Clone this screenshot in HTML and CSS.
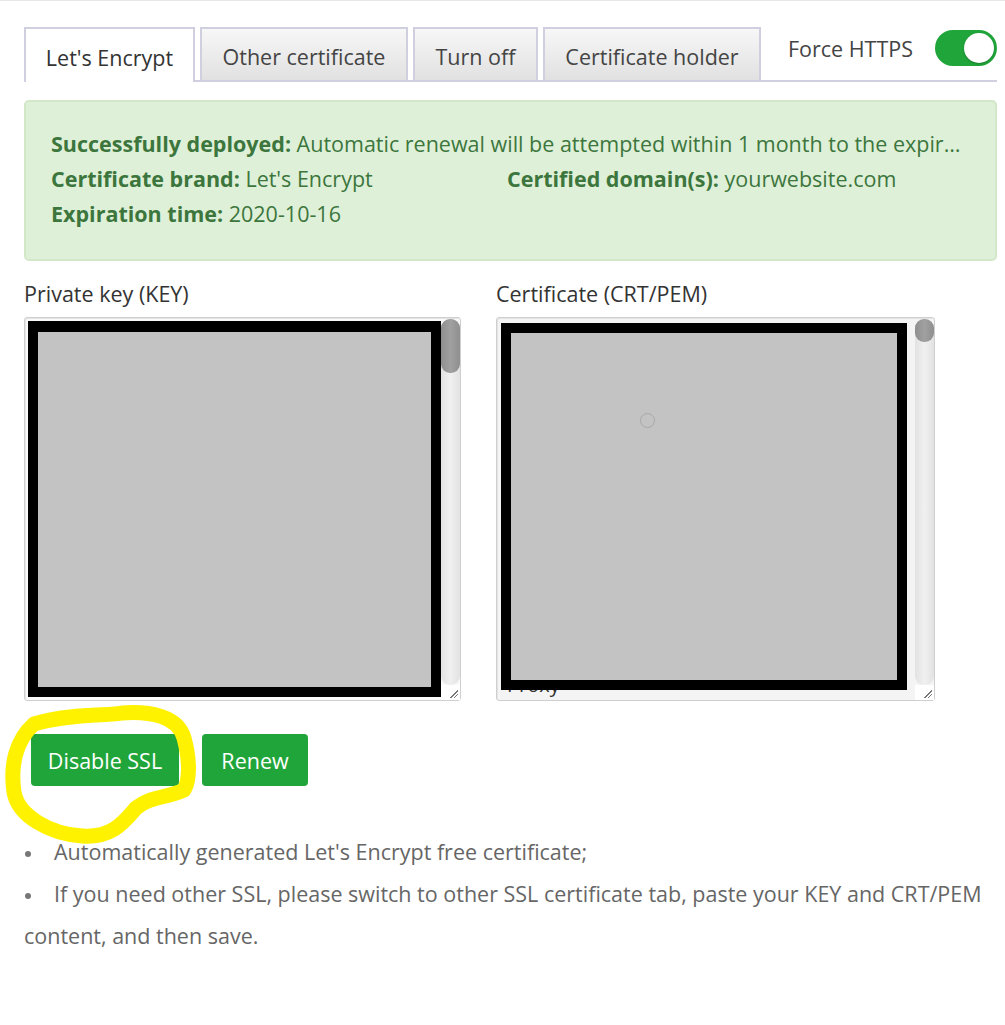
FILE: index.html
```html
<!DOCTYPE html>
<html lang="en">
<head>
<meta charset="utf-8">
<title>SSL</title>
<link rel="stylesheet" href="styles.css">
</head>
<body>
<div class="page">
  <div class="tab-row">
    <ul class="tabs">
      <li class="tab active">Let's Encrypt</li>
      <li class="tab">Other certificate</li>
      <li class="tab">Turn off</li>
      <li class="tab">Certificate holder</li>
    </ul>
    <div class="force">
      <span class="force-label">Force HTTPS</span>
      <span class="switch"><span class="knob"></span></span>
    </div>
  </div>

  <div class="alert">
    <p class="line ellipsis"><b>Successfully deployed:</b> Automatic renewal will be attempted within 1 month to the expiration date</p>
    <div class="line two">
      <span><b>Certificate brand:</b> Let's Encrypt</span>
      <span><b>Certified domain(s):</b> yourwebsite.com</span>
    </div>
    <p class="line"><b>Expiration time:</b> 2020-10-16</p>
  </div>

  <div class="fields">
    <div class="field key">
      <div class="label">Private key (KEY)</div>
      <div class="codebox">
        <div class="code"></div>
        <div class="scroll"><div class="track"><div class="thumb big"></div></div><div class="grip"></div></div>
        <div class="redact r1"></div>
      </div>
    </div>
    <div class="field cert">
      <div class="label">Certificate (CRT/PEM)</div>
      <div class="codebox alt">
        <div class="code"><span class="frag">Proxy</span></div>
        <div class="scroll"><div class="track"><div class="thumb small"></div></div><div class="grip"></div></div>
        <div class="redact r2"><span class="cursor"></span></div>
      </div>
    </div>
  </div>

  <div class="actions">
    <button class="btn">Disable SSL</button>
    <button class="btn">Renew</button>
  </div>

  <ul class="notes">
    <li>Automatically generated Let's Encrypt free certificate;</li>
    <li>If you need other SSL, please switch to other SSL certificate tab, paste your KEY and CRT/PEM content, and then save.</li>
  </ul>

  <svg class="highlight" width="210" height="150" viewBox="0 700 210 150" xmlns="http://www.w3.org/2000/svg">
    <path d="M34 724 C 70 713, 110 716, 122 713 C 150 711, 178 716, 184 738 C 190 760, 190 780, 184 790 C 168 798, 150 796, 136 808 C 124 822, 112 838, 82 836 C 50 834, 18 816, 14 792 C 10 765, 16 740, 34 724 Z" fill="none" stroke="#fff200" stroke-width="15" stroke-linejoin="round" stroke-linecap="round"/>
  </svg>
</div>
</body>
</html>
```

FILE: styles.css
```css
* { box-sizing: border-box; }
html, body { margin: 0; padding: 0; background: #fff; }
body {
  font-family: "Open Sans", "Noto Sans", "Liberation Sans", sans-serif;
  font-size: 21.5px;
  color: #333;
}
.page {
  position: relative;
  border-top: 1px solid #e8e8e8;
  padding: 26px 8px 40px 24px;
  min-height: 1025px;
}

/* tabs */
.tab-row {
  display: flex;
  align-items: flex-start;
  border-bottom: 2px solid #d0cfe0;
  height: 55px;
}
.tabs {
  display: flex;
  gap: 5px;
  list-style: none;
  margin: 0;
  padding: 0;
}
.tab {
  height: 53px;
  padding: 4px 12px 0;
  display: flex;
  align-items: center;
  justify-content: center;
  border: 2px solid #d0cfe0;
  border-bottom: none;
  background: linear-gradient(#f7f7f7, #e1e1e1);
  color: #444;
  white-space: nowrap;
}
.tab.active {
  background: #fff;
  height: 55px;
  color: #333;
}
.tab:nth-child(1) { width: 171px; }
.tab:nth-child(2) { width: 208px; }
.tab:nth-child(3) { width: 125px; }
.tab:nth-child(4) { width: 218px; }

.force {
  margin-left: auto;
  margin-top: 3px;
  display: flex;
  align-items: center;
  gap: 22px;
  height: 36px;
}
.force-label { color: #444; }
.switch {
  position: relative;
  width: 62px;
  height: 36px;
  border-radius: 18px;
  background: #20a53a;
}
.knob {
  position: absolute;
  right: 3px;
  top: 3px;
  width: 30px;
  height: 30px;
  border-radius: 50%;
  background: #fff;
  box-shadow: 0 1px 2px rgba(0,0,0,0.25);
}

/* alert */
.alert {
  margin-top: 18px;
  background: #dff0d8;
  border: 2px solid #d3e8c8;
  border-radius: 5px;
  padding: 24px 26px 28px 25px;
  color: #3c763d;
}
.line {
  margin: 0;
  line-height: 35px;
  white-space: nowrap;
}
.ellipsis {
  overflow: hidden;
  text-overflow: ellipsis;
}
.two {
  display: grid;
  grid-template-columns: 456px 1fr;
}
b { font-weight: 700; }

/* fields */
.fields {
  display: flex;
  gap: 35px;
  margin-top: 19px;
}
.label {
  line-height: 28px;
  margin-bottom: 9px;
  color: #333;
}
.field.key .codebox { width: 437px; }
.field.cert .codebox { width: 439px; }
.codebox {
  position: relative;
  display: flex;
  height: 384px;
  border: 1px solid #cfcfcf;
  border-radius: 3px;
  background: #fafafa;
  box-shadow: inset 1px 1px 0 #e4e4e4;
}
.codebox.alt { background: #f4f4f4; }
.code {
  flex: 1;
  position: relative;
}
.frag {
  position: absolute;
  left: 10px;
  top: 355px;
  font-size: 20px;
  line-height: 24px;
  color: #333;
}
.scroll {
  width: 19px;
  display: flex;
  flex-direction: column;
  padding-top: 1px;
}
.track {
  flex: 1;
  border-radius: 9px;
  background: linear-gradient(90deg, #e2e2e2, #f0f0f0 50%, #e2e2e2);
}
.thumb {
  width: 100%;
  border-radius: 9px;
  background: linear-gradient(90deg, #8f8f8f, #a0a0a0 50%, #8f8f8f);
}
.thumb.big { height: 54px; }
.thumb.small { height: 23px; }
.grip {
  height: 15px;
  background:
    linear-gradient(135deg, transparent 55%, #777 55%, #777 62%, transparent 62%, transparent 75%, #777 75%, #777 82%, transparent 82%) no-repeat right 2px bottom 2px / 9px 9px,
    #fff;
}
.redact {
  position: absolute;
  border: 10px solid #000;
  background: #c3c3c3;
}
.r1 { left: 3px; top: 3px; width: 413px; height: 376px; border-top-width: 11px; }
.r2 { left: 4px; top: 5px; width: 406px; height: 367px; }
.cursor {
  position: absolute;
  left: 129px;
  top: 80px;
  width: 15px;
  height: 15px;
  border-radius: 50%;
  border: 1px solid #a8a8a8;
}

/* buttons */
.actions {
  display: flex;
  gap: 23px;
  margin-top: 33px;
  padding-left: 7px;
}
.btn {
  height: 52px;
  border: none;
  border-radius: 4px;
  background: #20a53a;
  color: #fff;
  font: inherit;
  font-size: 21.5px;
  padding: 0;
}
.btn:first-child { width: 148px; }
.btn:last-child { width: 106px; }

/* notes */
.notes {
  list-style: none;
  margin: 45px 0 0;
  padding: 0;
  color: #666;
  line-height: 42px;
  font-size: 21.5px;
}
.notes li::before {
  content: "";
  display: inline-block;
  width: 6px;
  height: 6px;
  border-radius: 50%;
  background: #777;
  margin: 0 23px 0 1px;
  vertical-align: middle;
}

.highlight {
  position: absolute;
  left: 0;
  top: 699px;
  pointer-events: none;
}
```
